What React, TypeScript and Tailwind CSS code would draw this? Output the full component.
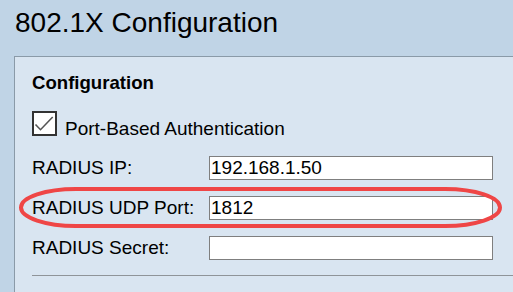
import React from "react";

const font = { fontFamily: '"Liberation Sans", Arial, sans-serif' };

function Row({ label, value }: { label: string; value: string }) {
  return (
    <div className="flex items-center h-[24px]">
      <div className="w-[177px] text-[19px] leading-[24px] text-black">{label}</div>
      <div className="w-[284px] h-[24px] bg-white border border-[#7f7f7f] flex items-center pl-[1px] text-[19px] leading-[22px] text-black">
        {value}
      </div>
    </div>
  );
}

export default function App() {
  return (
    <div
      className="relative w-[513px] h-[292px] overflow-hidden bg-[#c0d4e6]"
      style={font}
    >
      <div className="h-[56px] pl-[15px] pt-[7px] text-[28px] leading-[32px] text-black">
        802.1X Configuration
      </div>
      <div className="ml-[14px] w-[520px] h-[260px] bg-[#d9e5f1] border border-[#8a9aa8] pl-[17px] pt-[14px]">
        <div className="h-[24px] text-[18.6px] leading-[24px] font-bold text-black">
          Configuration
        </div>
        <div className="mt-[15px] flex items-end h-[26px]">
          <div className="w-[25px] h-[25px] bg-white border-2 border-[#333333] relative">
            <svg width="25" height="25" viewBox="0 0 25 25" className="absolute left-[-2px] top-[-2px]">
              <path d="M3.5 13.5 L8.5 18.7 L20.7 6" fill="none" stroke="#555" strokeWidth="1.6" />
            </svg>
          </div>
          <div className="ml-[8px] text-[19px] leading-[20px] mb-[-3px] text-black">
            Port-Based Authentication
          </div>
        </div>
        <div className="mt-[20px] flex flex-col gap-[16px]">
          <Row label="RADIUS IP:" value="192.168.1.50" />
          <Row label="RADIUS UDP Port:" value="1812" />
          <Row label="RADIUS Secret:" value="" />
        </div>
        <div className="mt-[15px] h-px bg-[#8f9499]" />
      </div>
      <svg
        className="absolute left-0 top-0 pointer-events-none"
        width="513"
        height="292"
        viewBox="0 0 513 292"
      >
        <rect x="21" y="189" width="479" height="37" rx="55" ry="18.5" fill="none" stroke="#ef4646" strokeWidth="4" />
      </svg>
    </div>
  );
}
